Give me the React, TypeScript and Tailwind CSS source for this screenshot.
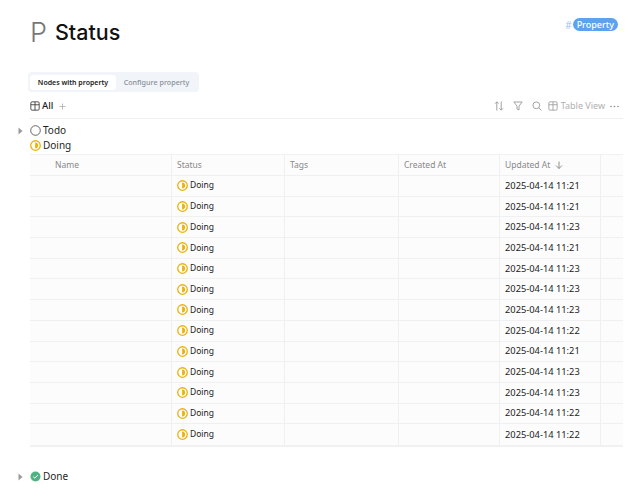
const rows = ["11:21","11:21","11:23","11:21","11:23","11:23","11:23","11:22","11:21","11:23","11:23","11:22","11:22"];

function Caret() {
  return (
    <svg width="5" height="8" viewBox="0 0 5 8" className="shrink-0">
      <path d="M0.5 0.5 L4.5 4 L0.5 7.5 Z" fill="#9a9a9a" />
    </svg>
  );
}

function DoingIcon({ size = 11 }: { size?: number }) {
  return (
    <svg width={size} height={size} viewBox="0 0 12 12" className="shrink-0">
      <circle cx="6" cy="6" r="5.2" fill="none" stroke="#eab308" strokeWidth="1.4" />
      <path d="M5.6 2.8 A3.2 3.2 0 0 1 5.6 9.2 Z" fill="#eab308" />
    </svg>
  );
}

function TableIcon({ color, size = 12 }: { color: string; size?: number }) {
  return (
    <svg width={size} height={size} viewBox="0 0 12 12" fill="none" stroke={color} strokeWidth="1" className="shrink-0">
      <rect x="1" y="1" width="10" height="10" rx="1.5" />
      <path d="M1 4.5 H11 M6 1 V11" />
    </svg>
  );
}

function Cell({ w, children, last }: { w: string; children?: React.ReactNode; last?: boolean }) {
  return (
    <div className={`${w} shrink-0 flex items-center h-full px-[5px] ${last ? "" : "border-r border-[#f0f0f0]"}`}>
      {children}
    </div>
  );
}

const widths = ["w-[142px]", "w-[113px]", "w-[114px]", "w-[101px]", "w-[101px]", "w-[22px]"];

export default function App() {
  return (
    <div className="w-[640px] h-[499px] overflow-hidden bg-white text-[#1f1f1f] font-['Noto_Sans','Liberation_Sans',sans-serif]">
      <div className="pl-[30px] w-[623px]">
        <div className="flex items-start justify-between h-[72px]">
          <div className="flex items-center gap-[8px] mt-[17px]">
            <span className="text-[27px] leading-[31px] font-light text-[#777777] font-['Inter',sans-serif]">P</span>
            <span className="text-[21.5px] leading-[31px] font-medium text-[#111111] font-['Inter',sans-serif]">Status</span>
          </div>
          <div className="flex items-center mt-[18px] mr-[5px]">
            <span className="text-[10px] leading-[12px] text-[#9fc5f5] mr-[1px]">#</span>
            <span className="h-[13px] px-[4px] rounded-full bg-[#5ea2ef] text-white text-[9px] font-medium leading-[13px]">Property</span>
          </div>
        </div>

        <div className="w-[171px] h-[20px] -ml-[2px] rounded-[4px] bg-[#f1f5f9] flex items-center p-[2px]">
          <div className="w-[86px] h-[15px] rounded-[3px] bg-white text-[7px] leading-[15px] font-semibold text-center text-[#1a1a1a]">Nodes with property</div>
          <div className="flex-1 text-center text-[7.2px] leading-[15px] font-medium text-[#8a8f98]">Configure property</div>
        </div>

        <div className="flex items-center justify-between h-[25px] mt-[2px] border-b border-[#efefef]">
          <div className="flex items-center">
            <TableIcon color="#333333" size={10} />
            <span className="ml-[2px] text-[9.5px] font-medium">All</span>
            <svg width="7" height="7" viewBox="0 0 7 7" className="ml-[6px]" stroke="#b5b5b5" strokeWidth="0.9"><path d="M3.5 0.5 V6.5 M0.5 3.5 H6.5" /></svg>
          </div>
          <div className="flex items-center">
            <svg width="10" height="10" viewBox="0 0 10 10" fill="none" stroke="#999999" strokeWidth="0.9"><path d="M2.8 9.5 V1 M1 2.7 L2.8 0.8 L4.6 2.7 M7.2 0.5 V9 M5.4 7.3 L7.2 9.2 L9 7.3" /></svg>
            <svg width="10" height="10" viewBox="0 0 10 10" fill="none" stroke="#999999" strokeWidth="0.9" className="ml-[9px]"><path d="M0.8 1 H9.2 L6 5 V9 L4 8 V5 Z" /></svg>
            <svg width="10" height="10" viewBox="0 0 10 10" fill="none" stroke="#999999" strokeWidth="0.9" className="ml-[9px]"><circle cx="4.3" cy="4.3" r="3.4" /><path d="M6.8 6.8 L9.5 9.5" /></svg>
            <span className="ml-[6px]"><TableIcon color="#999999" size={10} /></span>
            <span className="ml-[3px] text-[9px] text-[#b0b0b0]">Table View</span>
            <svg width="9" height="3" viewBox="0 0 9 3" fill="#888888" className="ml-[5px] mr-[4px]"><circle cx="1" cy="1.5" r="0.8" /><circle cx="4.5" cy="1.5" r="0.8" /><circle cx="8" cy="1.5" r="0.8" /></svg>
          </div>
        </div>

        <div className="flex items-center h-[15px] mt-[4px] relative">
          <span className="absolute -left-[12px] top-[4px]"><Caret /></span>
          <svg width="11" height="11" viewBox="0 0 11 11"><circle cx="5.5" cy="5.5" r="4.8" fill="none" stroke="#555555" strokeWidth="0.9" /></svg>
          <span className="ml-[2px] text-[10px]">Todo</span>
        </div>
        <div className="flex items-center h-[15px]">
          <DoingIcon />
          <span className="ml-[2px] text-[10px]">Doing</span>
        </div>

        <div className="mt-[1px] bg-[#fcfcfc] border-y border-[#f1f1f1] border-b-2">
          <div className="flex h-[21px] border-b border-[#f0f0f0] text-[8.5px] text-[#888888]">
            <Cell w={widths[0]}><span className="ml-[20px]">Name</span></Cell>
            <Cell w={widths[1]}>Status</Cell>
            <Cell w={widths[2]}>Tags</Cell>
            <Cell w={widths[3]}>Created At</Cell>
            <Cell w={widths[4]}>
              Updated At
              <svg width="8" height="8" viewBox="0 0 8 8" fill="none" stroke="#777777" strokeWidth="0.8" className="ml-[5px]"><path d="M4 0.5 V7.5 M1 4.5 L4 7.5 L7 4.5" /></svg>
            </Cell>
            <Cell w={widths[5]} last />
          </div>
          {rows.map((t, i) => (
            <div key={i} className="flex h-[20.7px] border-b border-[#f0f0f0] last:border-b-0 text-[8.5px] text-[#222222]">
              <Cell w={widths[0]} />
              <Cell w={widths[1]}>
                <DoingIcon size={11} />
                <span className="ml-[2px]">Doing</span>
              </Cell>
              <Cell w={widths[2]} />
              <Cell w={widths[3]} />
              <Cell w={widths[4]}><span className="text-[9.3px]">2025-04-14 {t}</span></Cell>
              <Cell w={widths[5]} last />
            </div>
          ))}
        </div>

        <div className="flex items-center h-[15px] mt-[22px] relative">
          <span className="absolute -left-[12px] top-[4px]"><Caret /></span>
          <svg width="11" height="11" viewBox="0 0 11 11">
            <circle cx="5.5" cy="5.5" r="5" fill="#4db383" />
            <path d="M3.2 5.6 L4.9 7.2 L7.9 4" fill="none" stroke="white" strokeWidth="1" />
          </svg>
          <span className="ml-[2px] text-[10px]">Done</span>
        </div>
      </div>
    </div>
  );
}
